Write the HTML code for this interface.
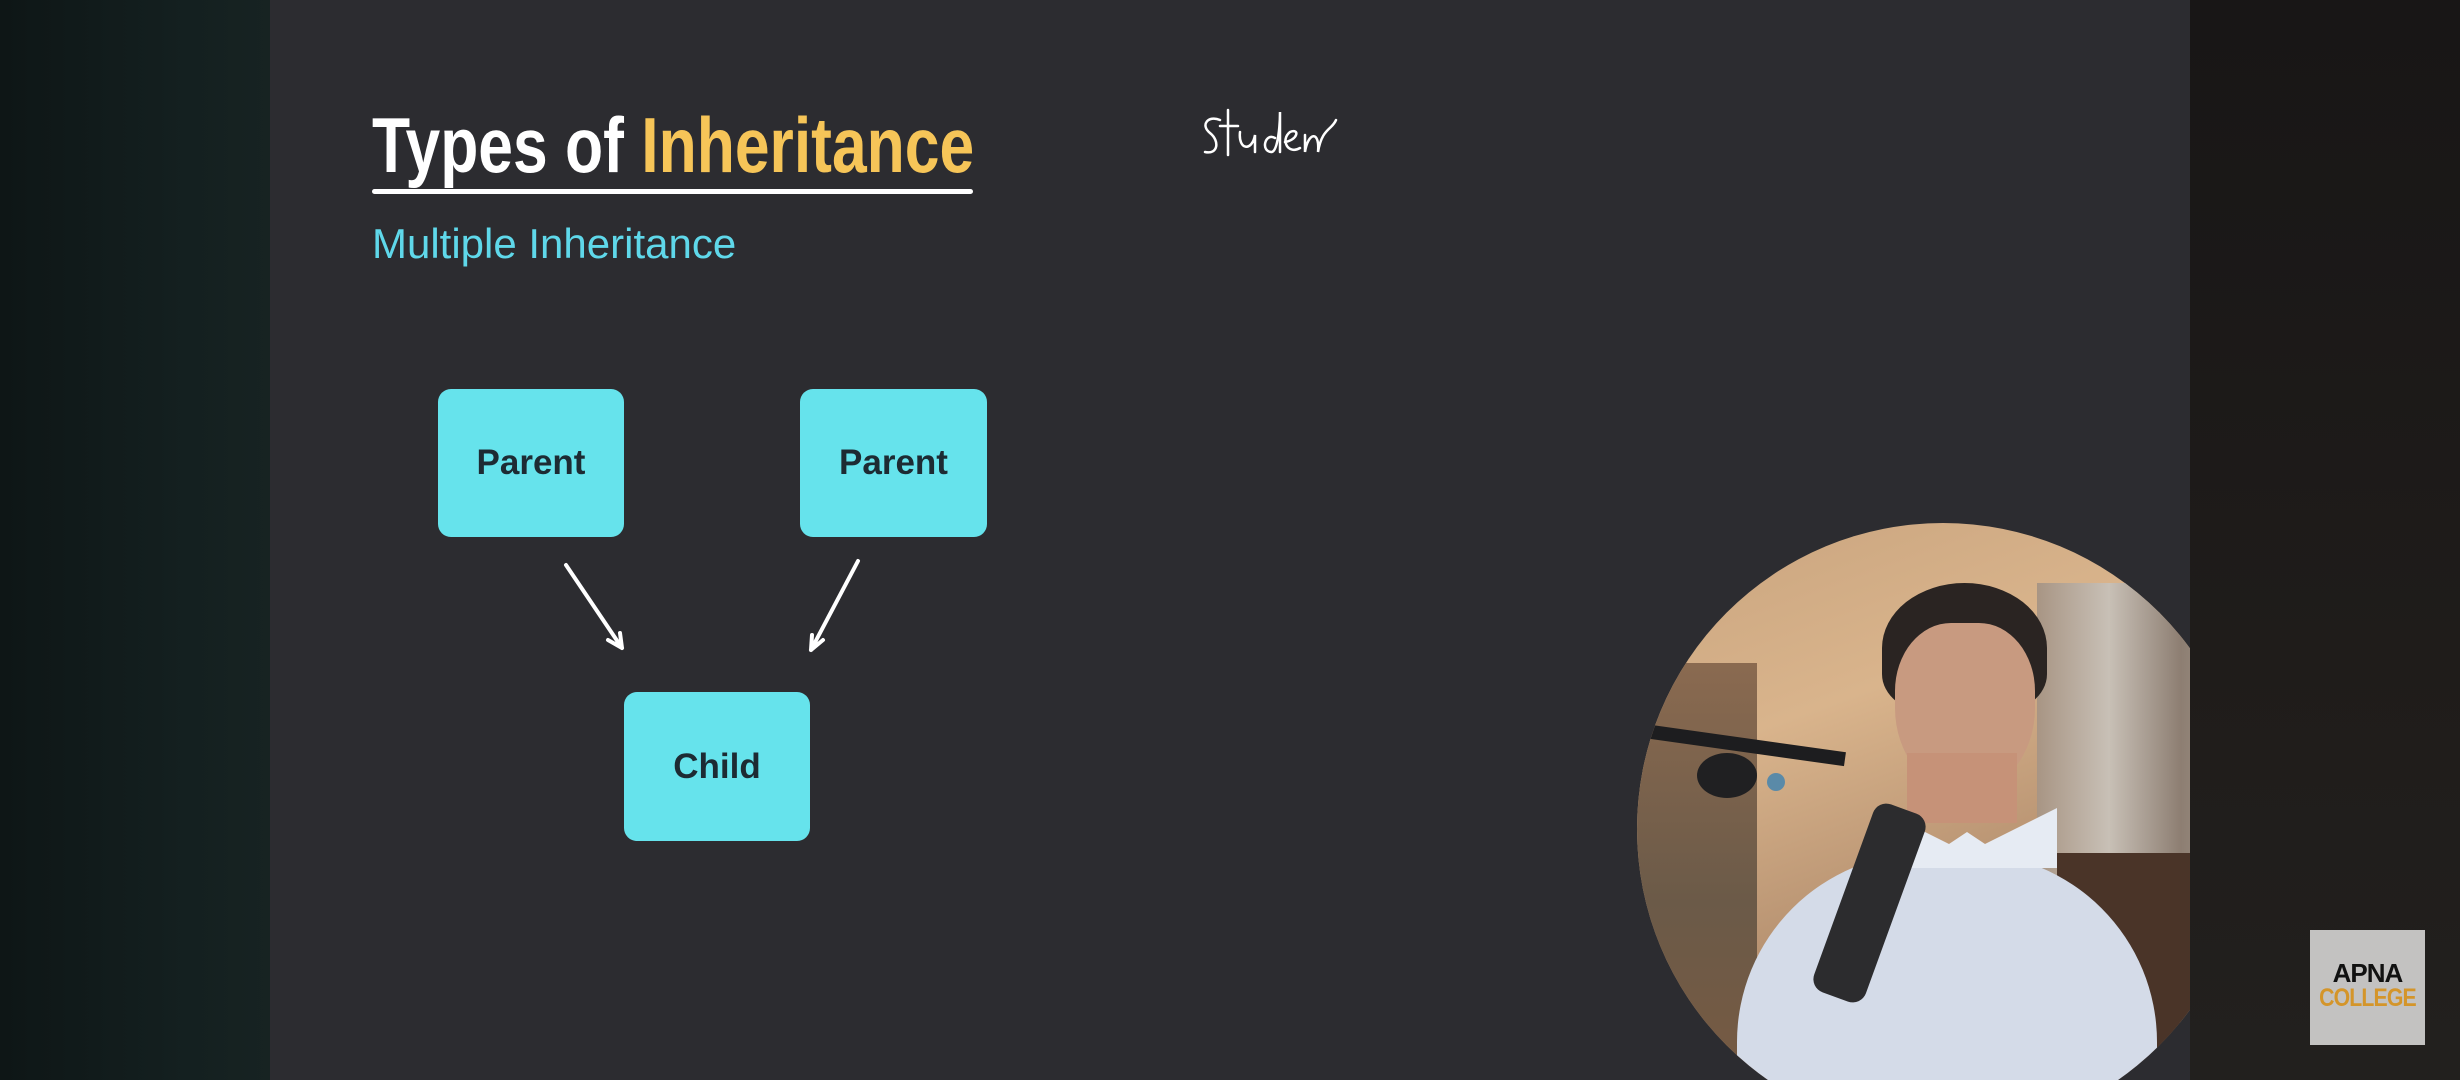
<!DOCTYPE html>
<html><head><meta charset="utf-8"><style>
html,body{margin:0;padding:0;width:2460px;height:1080px;overflow:hidden;background:#111;position:relative;}
.l{position:absolute;left:0;top:0;width:270px;height:1080px;background:linear-gradient(90deg,#0e1616,#142020 70%,#172322);}
.r{position:absolute;left:2190px;top:0;width:270px;height:1080px;background:linear-gradient(180deg,#181616,#1f1c1a 60%,#22201e);}
.s{position:absolute;left:270px;top:0;width:1920px;height:1080px;background:#2c2c30;overflow:hidden;}
.t{position:absolute;left:102px;top:106px;font-family:"Liberation Sans",sans-serif;font-weight:bold;font-size:78px;color:#fff;white-space:nowrap;line-height:1;transform:scaleX(0.8);transform-origin:left top;}
.t span{color:#f6c558;}
.u{position:absolute;left:102px;top:189px;width:601px;height:5px;background:#fff;border-radius:3px;}
.st{position:absolute;left:102px;top:220px;font-family:"Liberation Sans",sans-serif;font-size:42px;color:#5fd8ea;}
.b{position:absolute;background:#66e3ec;border-radius:13px;font-family:"Liberation Sans",sans-serif;font-weight:bold;font-size:35px;color:#1d2b33;display:flex;align-items:center;justify-content:center;}
.c{position:absolute;left:1367px;top:523px;width:612px;height:612px;border-radius:50%;overflow:hidden;background:linear-gradient(160deg,#c9a47e 0%,#d9b48c 30%,#b48f6f 60%,#6a4c3a 100%);}
.logo{position:absolute;left:2310px;top:930px;width:115px;height:115px;background:#c3c2c1;font-family:"Liberation Sans",sans-serif;font-weight:bold;text-align:center;overflow:hidden;}
</style></head><body>
<div class="l"></div><div class="r"></div>
<div class="s">
<div class="t">Types of <span>Inheritance</span></div>
<div class="u"></div>
<div class="st">Multiple Inheritance</div>
<div class="b" style="left:168px;top:389px;width:186px;height:148px;">Parent</div>
<div class="b" style="left:530px;top:389px;width:187px;height:148px;">Parent</div>
<div class="b" style="left:354px;top:692px;width:186px;height:149px;">Child</div>
<svg style="position:absolute;left:0;top:0" width="1920" height="1080">
<g stroke="#fff" stroke-width="4" fill="none" stroke-linecap="round">
<path d="M296 565 L352 648 M352 648 L338 640 M352 648 L350 633"/>
<path d="M588 561 L541 650 M541 650 L542 635 M541 650 L553 640"/>
<path stroke-width="2.5" d="M950 120 C938 115 930 125 940 133 C950 141 948 155 935 152 M958 110 L958 155 M950 126 L968 126 M970 132 C968 150 982 152 985 135 L985 152 M1005 138 C995 132 990 152 1002 152 C1008 150 1010 125 1010 112 L1010 152 M1015 142 C1028 140 1030 128 1020 132 C1010 140 1018 155 1030 148 M1035 135 L1035 152 C1038 132 1050 130 1048 152 C1052 128 1062 130 1066 120"/>
</g></svg>
<div class="c">
<div style="position:absolute;left:400px;top:60px;width:240px;height:440px;background:linear-gradient(90deg,#a89584,#c8c0b6 30%,#8d7e72 60%,#b7aca0);"></div>
<div style="position:absolute;left:0;top:140px;width:120px;height:480px;background:linear-gradient(180deg,#8a6a50,#6b5a48 50%,#7b5a40);"></div>
<div style="position:absolute;left:420px;top:330px;width:220px;height:300px;background:#4a3428;"></div>
<div style="position:absolute;left:100px;top:330px;width:420px;height:420px;border-radius:45% 45% 10% 10%;background:#d4dbe8;"></div>
<div style="position:absolute;left:245px;top:60px;width:165px;height:130px;border-radius:50% 50% 30% 30%;background:#2a2422;"></div>
<div style="position:absolute;left:258px;top:100px;width:140px;height:170px;border-radius:40% 40% 50% 50%;background:#c89a80;"></div>
<div style="position:absolute;left:270px;top:230px;width:110px;height:70px;background:#c69278;"></div>
<div style="position:absolute;left:240px;top:285px;width:180px;height:60px;background:#e6ebf3;clip-path:polygon(0 0,40% 60%,50% 40%,60% 60%,100% 0,100% 100%,0 100%);"></div>
<div style="position:absolute;left:205px;top:280px;width:55px;height:200px;border-radius:14px;background:#2c2c2e;transform:rotate(20deg);"></div>
<div style="position:absolute;left:0;top:200px;width:210px;height:14px;background:#1d1d1f;transform:rotate(8deg);transform-origin:left;"></div>
<div style="position:absolute;left:60px;top:230px;width:60px;height:45px;border-radius:50%;background:#202022;"></div>
<div style="position:absolute;left:130px;top:250px;width:18px;height:18px;border-radius:50%;background:#5a8aa8;"></div>
</div>
</div>
<div class="logo"><div style="padding-top:30px;font-size:26px;color:#111;letter-spacing:-1px;line-height:26px;">APNA</div><div style="font-size:25px;color:#d4952a;letter-spacing:-1px;line-height:24px;transform:scaleX(0.85);">COLLEGE</div></div>
</body></html>
